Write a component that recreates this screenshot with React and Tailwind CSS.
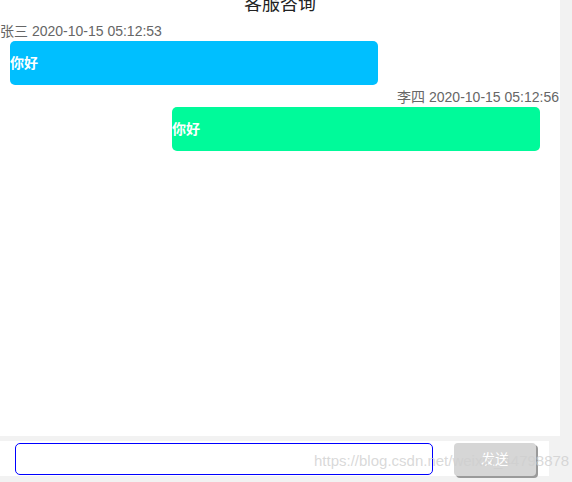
import React, { useState } from 'react';

const messages = [
  { id: 1, name: '张三', time: '2020-10-15 05:12:53', text: '你好', mine: false },
  { id: 2, name: '李四', time: '2020-10-15 05:12:56', text: '你好', mine: true },
];

const font = "font-['Liberation_Sans','Noto_Sans_CJK_SC',sans-serif]";

export default function App() {
  const [draft, setDraft] = useState('');

  return (
    <div className={`relative w-[572px] h-[482px] overflow-hidden bg-[#f2f2f2] ${font}`}>
      {/* Chat window */}
      <div className="w-[560px] h-[436px] bg-white flex flex-col">
        <h1 className="-mt-[8px] h-[24px] text-center text-[18px] leading-[24px] font-normal text-[#222]">
          客服咨询
        </h1>

        <div className="mt-[5px] flex flex-col">
          {messages.map((m) => (
            <div key={m.id} className={`flex flex-col ${m.mine ? 'items-end mt-[2px] pr-[1px]' : 'items-start'}`}>
              <div className="h-[20px] text-[14px] leading-[20px] text-[#666]">
                {m.name} {m.time}
              </div>
              <div
                className={`w-[368px] h-[44px] rounded-[5px] flex items-center text-[14px] font-bold text-white ${
                  m.mine ? 'mr-[19px] bg-[#00fa9a]' : 'ml-[10px] bg-[#00bfff]'
                }`}
              >
                {m.text}
              </div>
            </div>
          ))}
        </div>
      </div>

      {/* Input bar */}
      <div className="mt-[5px] w-[549px] h-[35px] bg-white flex items-start">
        <input
          className="ml-[15px] mt-[2px] w-[418px] h-[32px] rounded-[5px] border border-[#0000ff] outline-none px-2 text-[14px]"
          value={draft}
          onChange={(e) => setDraft(e.target.value)}
        />
        <button className="ml-[21px] mt-[2px] w-[82px] h-[33px] rounded-[4px] bg-[#d6d6d6] text-white text-[14px] shadow-[2px_2px_0_#9a9a9a]">
          发送
        </button>
      </div>

      {/* watermark */}
      <div className="absolute left-[314px] top-[451px] text-[15px] leading-[20px] text-[#cfcfcf]/80 pointer-events-none whitespace-nowrap">
        https://blog.csdn.net/weixin_44798878
      </div>
    </div>
  );
}
